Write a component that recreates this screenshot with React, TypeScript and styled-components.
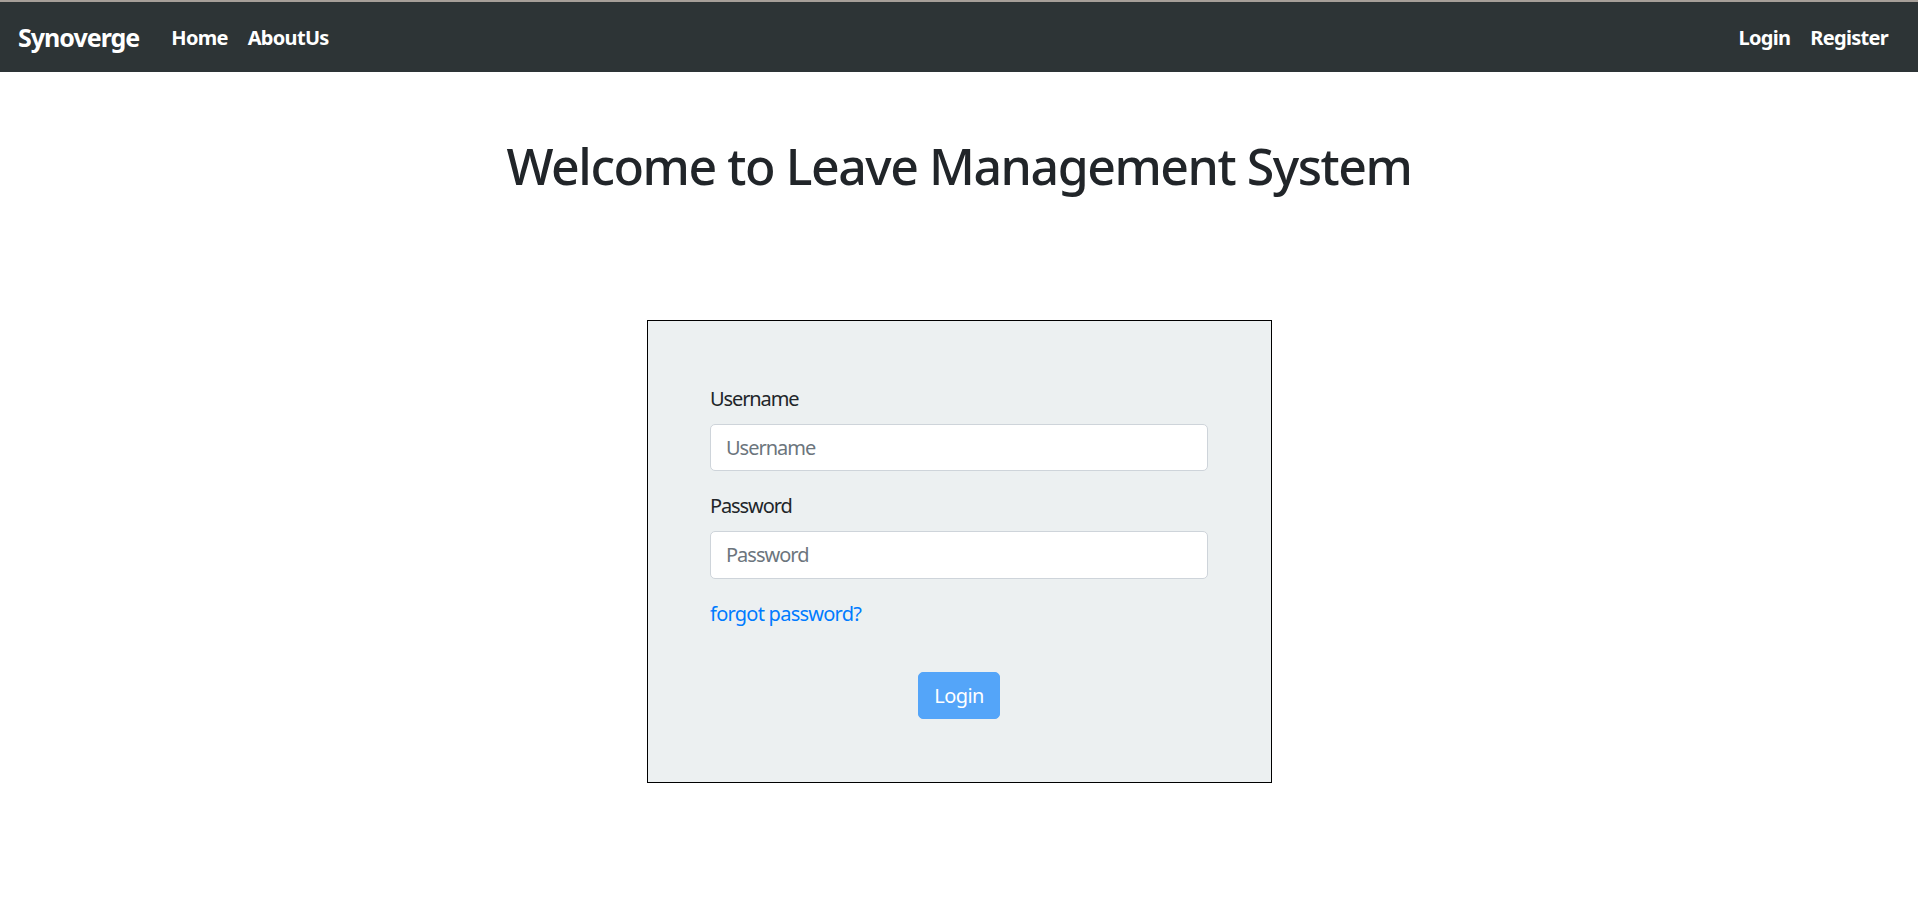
import React from "react";
import styled, { createGlobalStyle } from "styled-components";

const Global = createGlobalStyle`
  * { box-sizing: border-box; }
  html, body { margin: 0; padding: 0; background: #ffffff; }
  body {
    font-family: "Noto Sans", "Open Sans", "Liberation Sans", sans-serif;
    font-size: 20px;
    line-height: 1.5;
    color: #212529;
  }
`;

const TopLine = styled.div`
  height: 2px;
  background: #a69f99;
`;

const Navbar = styled.nav`
  height: 70px;
  background: #2d3436;
  display: flex;
  align-items: center;
  justify-content: space-between;
  padding: 2px 20px 0 18px;
`;

const NavGroup = styled.div`
  display: flex;
  align-items: center;
`;

const Brand = styled.a`
  color: #ffffff;
  font-weight: 700;
  font-size: 25px;
  line-height: 1.5;
  margin-right: 22px;
  text-decoration: none;
  letter-spacing: -1px;
`;

const NavLink = styled.a`
  color: #ffffff;
  font-weight: 700;
  font-size: 20px;
  padding: 0 10px;
  text-decoration: none;
  letter-spacing: -0.7px;
`;

const Main = styled.main`
  display: flex;
  flex-direction: column;
  align-items: center;
`;

const Title = styled.h1`
  margin: 64px 0 0;
  font-size: 50px;
  font-weight: 500;
  line-height: 1.2;
  color: #212529;
  text-align: center;
  letter-spacing: -1.45px;
`;

const Card = styled.form`
  margin-top: 124px;
  width: 625px;
  border: 1px solid #000000;
  background: #ecf0f1;
  padding: 62.5px;
  display: flex;
  flex-direction: column;
`;

const FormGroup = styled.div`
  display: flex;
  flex-direction: column;
  margin-bottom: 20px;
`;

const Label = styled.label`
  font-size: 20px;
  line-height: 30px;
  margin-bottom: 10px;
  color: #212529;
  letter-spacing: -1.1px;
`;

const Input = styled.input`
  height: 47.5px;
  width: 100%;
  padding: 7.5px 15px;
  font-family: inherit;
  font-size: 20px;
  line-height: 30px;
  color: #495057;
  background: #ffffff;
  border: 1px solid #ced4da;
  border-radius: 5px;
  outline: none;
  letter-spacing: -1px;
  &::placeholder {
    color: #6c757d;
    opacity: 1;
  }
`;

const ForgotLink = styled.a`
  color: #007bff;
  font-size: 20px;
  line-height: 30px;
  text-decoration: none;
  letter-spacing: -0.75px;
`;

const ButtonRow = styled.div`
  display: flex;
  justify-content: center;
  margin-top: 43px;
`;

const Button = styled.button`
  height: 47.5px;
  padding: 8.5px 15px 6.5px;
  font-family: inherit;
  font-size: 20px;
  line-height: 30px;
  color: #ffffff;
  background: #54a5f9;
  border: 1px solid #54a5f9;
  border-radius: 5px;
  letter-spacing: -0.6px;
`;

export default function App() {
  return (
    <>
      <Global />
      <TopLine />
      <Navbar>
        <NavGroup>
          <Brand href="#">Synoverge</Brand>
          <NavLink href="#">Home</NavLink>
          <NavLink href="#">AboutUs</NavLink>
        </NavGroup>
        <NavGroup>
          <NavLink href="#">Login</NavLink>
          <NavLink href="#">Register</NavLink>
        </NavGroup>
      </Navbar>
      <Main>
        <Title>Welcome to Leave Management System</Title>
        <Card onSubmit={(e) => e.preventDefault()}>
          <FormGroup>
            <Label htmlFor="username">Username</Label>
            <Input id="username" type="text" placeholder="Username" />
          </FormGroup>
          <FormGroup>
            <Label htmlFor="password">Password</Label>
            <Input id="password" type="password" placeholder="Password" />
          </FormGroup>
          <ForgotLink href="#">forgot password?</ForgotLink>
          <ButtonRow>
            <Button type="submit" disabled>
              Login
            </Button>
          </ButtonRow>
        </Card>
      </Main>
    </>
  );
}
